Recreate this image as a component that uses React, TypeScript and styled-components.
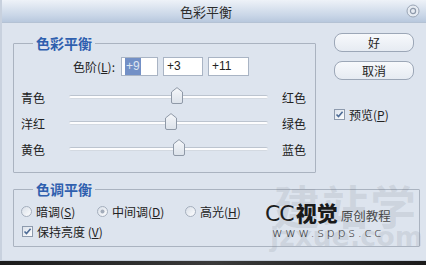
import React from 'react';
import styled, { createGlobalStyle } from 'styled-components';

const GlobalStyle = createGlobalStyle`
  html, body {
    margin: 0;
    padding: 0;
    background: #1c1c1c;
  }
  body {
    font-family: "Noto Sans CJK SC", "Noto Sans", sans-serif;
    font-size: 12px;
    color: #222;
  }
`;

interface SliderSpec {
  left: string;
  right: string;
  value: number;
}

const SLIDERS: SliderSpec[] = [
  { left: '青色', right: '红色', value: 9 },
  { left: '洋红', right: '绿色', value: 3 },
  { left: '黄色', right: '蓝色', value: 11 },
];

const LEVELS = [
  { value: '+9', width: 37, selected: true },
  { value: '+3', width: 40, selected: false },
  { value: '+11', width: 41, selected: false },
];

const TONES = [
  { label: '暗调', key: 'S', width: 76, checked: false },
  { label: '中间调', key: 'D', width: 88, checked: true },
  { label: '高光', key: 'H', width: 0, checked: false },
];

const CloseIcon = () => (
  <svg width="14" height="14" viewBox="0 0 14 14">
    <circle cx="7" cy="7" r="6" fill="#e6ebf2" stroke="#9aa5b5" strokeWidth="1" />
    <circle cx="7" cy="7" r="2.6" fill="none" stroke="#8e99aa" strokeWidth="1.2" />
  </svg>
);

const CheckBox = () => (
  <svg width="11" height="11" viewBox="0 0 11 11">
    <defs>
      <linearGradient id="cbg" x1="0" y1="0" x2="1" y2="1">
        <stop offset="0" stopColor="#d9e0ea" />
        <stop offset="1" stopColor="#ffffff" />
      </linearGradient>
    </defs>
    <rect x="0.5" y="0.5" width="10" height="10" fill="url(#cbg)" stroke="#8d9aad" />
    <path d="M2.5 5.5 L4.5 7.6 L8.6 2.8" fill="none" stroke="#4d6b96" strokeWidth="1.6" />
  </svg>
);

const RadioIcon = ({ checked }: { checked: boolean }) => (
  <svg width="11" height="11" viewBox="0 0 11 11">
    <defs>
      <linearGradient id="rbg" x1="0" y1="0" x2="1" y2="1">
        <stop offset="0" stopColor="#d6dde7" />
        <stop offset="1" stopColor="#ffffff" />
      </linearGradient>
    </defs>
    <circle cx="5.5" cy="5.5" r="5" fill="url(#rbg)" stroke="#a4aebc" />
    {checked && <circle cx="5.5" cy="5.5" r="2" fill="#a3acba" />}
  </svg>
);

const ThumbIcon = () => (
  <svg width="12" height="17" viewBox="0 0 12 17">
    <defs>
      <linearGradient id="tbg" x1="0" y1="0" x2="0" y2="1">
        <stop offset="0" stopColor="#f5f7fa" />
        <stop offset="1" stopColor="#dce2ea" />
      </linearGradient>
    </defs>
    <path
      d="M0.5 5 L6 0.6 L11.5 5 L11.5 15 Q11.5 16.5 10 16.5 L2 16.5 Q0.5 16.5 0.5 15 Z"
      fill="url(#tbg)"
      stroke="#8f99a7"
    />
  </svg>
);

const App: React.FC = () => {
  return (
    <>
      <GlobalStyle />
      <Window>
        <TitleBar>
          <Title>色彩平衡</Title>
          <CloseIcon />
        </TitleBar>
        <Body>
          <TopRow>
            <Group $width={303} $top={2}>
              <Legend>色彩平衡</Legend>
              <LevelRow>
                <LevelLabel>
                  色阶(<u>L</u>):
                </LevelLabel>
                {LEVELS.map(level => (
                  <LevelInput key={level.value} $w={level.width}>
                    {level.selected ? <Selected>{level.value}</Selected> : level.value}
                  </LevelInput>
                ))}
              </LevelRow>
              {SLIDERS.map(s => (
                <SliderRow key={s.left}>
                  <span>{s.left}</span>
                  <Track>
                    <Thumb style={{ left: `${((s.value + 100) / 200) * 100}%` }}>
                      <ThumbIcon />
                    </Thumb>
                  </Track>
                  <RightLabel>{s.right}</RightLabel>
                </SliderRow>
              ))}
            </Group>
            <Side>
              <Button>好</Button>
              <Button>取消</Button>
              <CheckRow $top={17}>
                <CheckBox />
                <span>
                  预览(<u>P</u>)
                </span>
              </CheckRow>
            </Side>
          </TopRow>
          <Group $width={407} $top={8} $tight>
            <Legend>色调平衡</Legend>
            <RadioRow>
              {TONES.map(t => (
                <RadioItem key={t.key} $w={t.width}>
                  <RadioIcon checked={t.checked} />
                  <span>
                    {t.label}(<u>{t.key}</u>)
                  </span>
                </RadioItem>
              ))}
            </RadioRow>
            <CheckRow $top={4} $indent={1}>
              <CheckBox />
              <span>
                保持亮度 (<u>V</u>)
              </span>
            </CheckRow>
          </Group>
        </Body>
        <Watermark>
          <BigMark>建站学</BigMark>
          <BigDomain>jzxue.com</BigDomain>
          <Brand>
            <BrandCC>CC</BrandCC>
            <BrandBold>视觉</BrandBold>
            <BrandSub>原创教程</BrandSub>
          </Brand>
          <BrandUrl>www.spps.cc</BrandUrl>
        </Watermark>
      </Window>
      <Desktop />
    </>
  );
};

const Window = styled.div`
  position: relative;
  width: 426px;
  height: 261px;
  box-sizing: border-box;
  background: #dde4ee;
  border-left: 2px solid #c8d1de;
  border-bottom: 1px solid #c3ccd8;
  display: flex;
  flex-direction: column;
  overflow: hidden;
`;

const TitleBar = styled.div`
  height: 23px;
  flex: none;
  display: flex;
  align-items: center;
  padding-right: 6px;
  background: linear-gradient(#eef2f8, #c9d6e7 70%, #b8c8dd);
  border-bottom: 1px solid #b4c2d4;
  box-sizing: border-box;
`;

const Title = styled.div`
  flex: 1;
  text-align: center;
  font-size: 13px;
  color: #2c2c2c;
  padding-left: 4px;
`;

const Body = styled.div`
  flex: 1;
  display: flex;
  flex-direction: column;
  padding: 10px 0 0 11px;
`;

const TopRow = styled.div`
  display: flex;
  align-items: flex-start;
  gap: 18px;
`;

const Group = styled.fieldset<{ $width: number; $top: number; $tight?: boolean }>`
  margin: ${p => p.$top}px 0 0 0;
  padding: ${p => (p.$tight ? '5px 10px 7px 7px' : '5px 4px 10px 7px')};
  width: ${p => p.$width}px;
  box-sizing: border-box;
  min-inline-size: 0;
  border: 1px solid #aab3c0;
  border-radius: 1px;
`;

const Legend = styled.legend`
  margin-left: 12px;
  padding: 0 3px;
  font-size: 14px;
  line-height: 17px;
  font-weight: bold;
  color: #2f5fae;
`;

const LevelRow = styled.div`
  display: flex;
  align-items: center;
  height: 19px;
  gap: 5px;
  margin-bottom: 8px;
`;

const LevelLabel = styled.span`
  width: 94px;
  text-align: right;
  padding-right: 1px;
`;

const LevelInput = styled.div<{ $w: number }>`
  width: ${p => p.$w}px;
  height: 19px;
  box-sizing: border-box;
  border: 1px solid #a9b4c4;
  background: #fff;
  padding-left: 3px;
  font-family: "Liberation Sans", Arial, sans-serif;
  font-size: 12px;
  line-height: 17px;
  color: #222;
`;

const Selected = styled.span`
  background: #7390c6;
  color: #dfe6f2;
  padding: 1px 1px 2px;
`;

const SliderRow = styled.div`
  display: grid;
  grid-template-columns: 48px 199px 1fr;
  align-items: center;
  height: 26px;
`;

const Track = styled.div`
  position: relative;
  height: 2px;
  background: #fdfdfe;
  border-top: 1px solid #bcc4cf;
  border-bottom: 1px solid #d3d9e1;
  border-radius: 2px;
`;

const Thumb = styled.div`
  position: absolute;
  top: -9px;
  width: 12px;
  height: 17px;
  margin-left: -6px;
  line-height: 0;
`;

const RightLabel = styled.span`
  padding-left: 14px;
  white-space: nowrap;
`;

const Side = styled.div`
  width: 80px;
  display: flex;
  flex-direction: column;
  gap: 9px;
`;

const Button = styled.div`
  height: 19px;
  box-sizing: border-box;
  border: 1px solid #9ca7b7;
  border-radius: 8px;
  background: linear-gradient(#f7f9fc, #e6ebf2);
  display: flex;
  align-items: center;
  justify-content: center;
  font-size: 12px;
  color: #1e1e1e;
`;

const CheckRow = styled.div<{ $top: number; $indent?: number }>`
  display: flex;
  align-items: center;
  gap: 4px;
  height: 16px;
  margin-top: ${p => p.$top}px;
  padding-left: ${p => p.$indent ?? 0}px;
  svg {
    flex: none;
  }
`;

const RadioRow = styled.div`
  display: flex;
  align-items: center;
  height: 16px;
`;

const RadioItem = styled.div<{ $w: number }>`
  display: flex;
  align-items: center;
  gap: 4px;
  width: ${p => (p.$w ? `${p.$w}px` : 'auto')};
  flex: none;
`;

const Watermark = styled.div`
  position: absolute;
  left: 260px;
  top: 180px;
  width: 164px;
  height: 78px;
  pointer-events: none;
`;

const BigMark = styled.div`
  position: absolute;
  left: 12px;
  top: -2px;
  font-size: 46px;
  line-height: 52px;
  font-weight: bold;
  letter-spacing: 2px;
  color: rgba(120, 126, 136, 0.17);
`;

const BigDomain = styled.div`
  position: absolute;
  left: 8px;
  top: 42px;
  font-family: "DejaVu Sans", sans-serif;
  font-size: 27px;
  line-height: 30px;
  font-weight: bold;
  color: rgba(120, 126, 136, 0.16);
`;

const Brand = styled.div`
  position: absolute;
  left: 3px;
  top: 19px;
  display: flex;
  align-items: baseline;
  white-space: nowrap;
  line-height: 26px;
`;

const BrandCC = styled.span`
  font-family: "DejaVu Sans", sans-serif;
  font-size: 22px;
  color: #1e1e1e;
  letter-spacing: -1px;
`;

const BrandBold = styled.span`
  font-size: 21px;
  font-weight: 900;
  color: #1a1a1a;
  margin-left: 2px;
`;

const BrandSub = styled.span`
  font-size: 12.5px;
  color: #4a4a4a;
  margin-left: 3px;
`;

const BrandUrl = styled.div`
  position: absolute;
  left: 10px;
  top: 46px;
  font-family: "DejaVu Sans", sans-serif;
  font-size: 13px;
  font-weight: 300;
  letter-spacing: 2.6px;
  color: #2e2e2e;
  line-height: 14px;
`;

const Desktop = styled.div`
  width: 426px;
  height: 4px;
  background: linear-gradient(90deg, #1b1b1b, #3a3a3a 50%, #1b1b1b);
`;

export default App;
